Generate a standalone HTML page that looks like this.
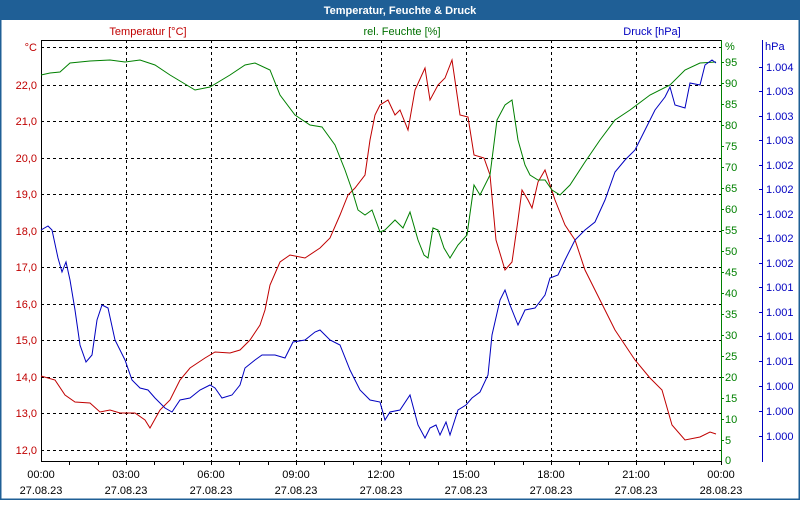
<!DOCTYPE html><html><head><style>body{margin:0;width:800px;height:500px;overflow:hidden;background:#fff;font-family:"Liberation Sans",sans-serif}</style></head><body>
<svg width="800" height="500" xmlns="http://www.w3.org/2000/svg" font-family="Liberation Sans, sans-serif" font-size="11">
<rect x="0" y="0" width="800" height="500" fill="#fff"/>
<rect x="0" y="0" width="800" height="20" fill="#1f5f96"/>
<rect x="0" y="0" width="1.5" height="500" fill="#1f5f96"/><rect x="798.5" y="0" width="1.5" height="500" fill="#1f5f96"/><rect x="0" y="498.5" width="800" height="1.5" fill="#1f5f96"/>
<text x="400" y="14" fill="#fff" font-weight="bold" text-anchor="middle" font-size="11">Temperatur, Feuchte &amp; Druck</text>
<text x="148" y="35" fill="#c00000" text-anchor="middle">Temperatur [°C]</text>
<text x="402" y="35" fill="#007000" text-anchor="middle">rel. Feuchte [%]</text>
<text x="652" y="35" fill="#0000c0" text-anchor="middle">Druck [hPa]</text>
<g stroke="#000" stroke-dasharray="3,3" stroke-width="1">
<line x1="41" x2="721" y1="47.5" y2="47.5"/><line x1="41" x2="721" y1="85.5" y2="85.5"/><line x1="41" x2="721" y1="121.5" y2="121.5"/><line x1="41" x2="721" y1="158.5" y2="158.5"/><line x1="41" x2="721" y1="194.5" y2="194.5"/><line x1="41" x2="721" y1="231.5" y2="231.5"/><line x1="41" x2="721" y1="267.5" y2="267.5"/><line x1="41" x2="721" y1="304.5" y2="304.5"/><line x1="41" x2="721" y1="340.5" y2="340.5"/><line x1="41" x2="721" y1="377.5" y2="377.5"/><line x1="41" x2="721" y1="413.5" y2="413.5"/><line x1="41" x2="721" y1="450.5" y2="450.5"/>
<line y1="40" y2="461" x1="126.5" x2="126.5"/><line y1="40" y2="461" x1="211.5" x2="211.5"/><line y1="40" y2="461" x1="296.5" x2="296.5"/><line y1="40" y2="461" x1="381.5" x2="381.5"/><line y1="40" y2="461" x1="466.5" x2="466.5"/><line y1="40" y2="461" x1="551.5" x2="551.5"/><line y1="40" y2="461" x1="636.5" x2="636.5"/>
</g>
<path d="M41.5 40.5H721.5M41.5 40V461.5H721" stroke="#000" fill="none"/>
<line x1="721.5" x2="721.5" y1="40" y2="462" stroke="#008000"/>
<line x1="762.5" x2="762.5" y1="40" y2="462" stroke="#0000c0"/>
<g stroke="#000"><path d="M69.5 461v4M98.5 461v4M126.5 461v4M154.5 461v4M183.5 461v4M211.5 461v4M239.5 461v4M268.5 461v4M296.5 461v4M324.5 461v4M353.5 461v4M381.5 461v4M409.5 461v4M438.5 461v4M466.5 461v4M494.5 461v4M523.5 461v4M551.5 461v4M579.5 461v4M608.5 461v4M636.5 461v4M664.5 461v4M693.5 461v4M721.5 461v4"/></g>
<g fill="#c00000" text-anchor="end">
<text x="37" y="51">°C</text><text x="37" y="89">22,0</text><text x="37" y="125">21,0</text><text x="37" y="162">20,0</text><text x="37" y="198">19,0</text><text x="37" y="235">18,0</text><text x="37" y="271">17,0</text><text x="37" y="308">16,0</text><text x="37" y="344">15,0</text><text x="37" y="381">14,0</text><text x="37" y="417">13,0</text><text x="37" y="454">12,0</text>
</g>
<g fill="#008000">
<text x="725" y="50">%</text><text x="725" y="66">95</text><text x="725" y="87">90</text><text x="725" y="108">85</text><text x="725" y="129">80</text><text x="725" y="150">75</text><text x="725" y="171">70</text><text x="725" y="192">65</text><text x="725" y="213">60</text><text x="725" y="234">55</text><text x="725" y="255">50</text><text x="725" y="276">45</text><text x="725" y="297">40</text><text x="725" y="318">35</text><text x="725" y="339">30</text><text x="725" y="360">25</text><text x="725" y="381">20</text><text x="725" y="402">15</text><text x="725" y="423">10</text><text x="725" y="444">5</text><text x="725" y="464">0</text>
</g>
<g stroke="#008000"><path d="M721 62.5h3M721 83.5h3M721 104.5h3M721 125.5h3M721 146.5h3M721 167.5h3M721 188.5h3M721 209.5h3M721 230.5h3M721 251.5h3M721 272.5h3M721 293.5h3M721 314.5h3M721 335.5h3M721 356.5h3M721 377.5h3M721 398.5h3M721 419.5h3M721 440.5h3"/></g>
<g fill="#0000c0">
<text x="765" y="50">hPa</text>
<text x="766" y="71">1.004</text><text x="766" y="95">1.003</text><text x="766" y="120">1.003</text><text x="766" y="144">1.003</text><text x="766" y="169">1.002</text><text x="766" y="193">1.002</text><text x="766" y="218">1.002</text><text x="766" y="242">1.002</text><text x="766" y="267">1.002</text><text x="766" y="291">1.001</text><text x="766" y="316">1.001</text><text x="766" y="340">1.001</text><text x="766" y="365">1.001</text><text x="766" y="390">1.000</text><text x="766" y="415">1.000</text><text x="766" y="440">1.000</text>
</g>
<g stroke="#0000c0"><path d="M759 67.5h3M759 91.5h3M759 116.5h3M759 140.5h3M759 165.5h3M759 189.5h3M759 214.5h3M759 238.5h3M759 263.5h3M759 287.5h3M759 312.5h3M759 336.5h3M759 361.5h3M759 386.5h3M759 411.5h3M759 436.5h3"/></g>
<g fill="#000" text-anchor="middle">
<text x="41" y="478">00:00</text><text x="41" y="494">27.08.23</text>
<text x="126" y="478">03:00</text><text x="126" y="494">27.08.23</text>
<text x="211" y="478">06:00</text><text x="211" y="494">27.08.23</text>
<text x="296" y="478">09:00</text><text x="296" y="494">27.08.23</text>
<text x="381" y="478">12:00</text><text x="381" y="494">27.08.23</text>
<text x="466" y="478">15:00</text><text x="466" y="494">27.08.23</text>
<text x="551" y="478">18:00</text><text x="551" y="494">27.08.23</text>
<text x="636" y="478">21:00</text><text x="636" y="494">27.08.23</text>
<text x="721" y="478">00:00</text><text x="721" y="494">28.08.23</text>
</g>
<polyline fill="none" stroke="#c00000" points="41,376 55,380 65,395 75,402 90,403 100,412 110,410 120,413 135,413 145,420 150,428 160,410 170,400 180,380 190,368 205,358 215,352 230,353 240,350 250,340 260,325 265,310 270,285 280,262 290,255 305,258 320,248 330,238 340,215 348,195 355,188 365,175 370,140 375,115 380,105 388,100 395,115 400,110 408,130 415,90 425,68 430,100 438,85 445,78 452,60 460,115 468,117 474,155 484,158 490,175 496,240 505,270 512,262 518,220 522,190 528,200 532,208 538,182 545,170 555,200 565,225 575,240 585,270 600,300 615,330 635,360 650,378 662,390 672,425 685,440 700,437 710,432 716,434"/>
<polyline fill="none" stroke="#008000" points="41,75 50,73 60,72 70,63 90,61 110,60 125,62 140,60 155,65 170,75 195,90 210,87 230,75 245,65 255,63 270,70 280,95 295,115 310,125 322,127 335,145 345,170 352,190 358,210 365,215 372,210 380,232 385,230 395,220 403,228 410,212 418,240 424,255 428,258 433,228 438,230 444,248 450,258 458,245 467,235 474,185 480,195 490,175 497,120 505,105 512,100 518,140 525,165 530,175 538,180 545,180 552,190 560,195 570,185 585,162 600,140 615,120 630,110 650,95 670,85 685,70 700,63 716,62"/>
<polyline fill="none" stroke="#0000c0" points="41,230 48,226 52,230 58,258 62,272 66,262 70,280 75,310 80,345 86,362 92,355 97,320 102,305 108,308 115,340 125,360 132,380 140,388 148,390 155,398 165,408 172,412 180,400 190,398 200,390 210,385 215,388 222,398 232,395 240,385 245,368 255,360 262,355 275,355 285,358 293,342 305,340 315,332 320,330 330,340 340,345 350,370 360,390 370,400 380,402 385,420 390,412 400,410 410,395 418,425 425,438 430,428 436,425 440,435 446,422 450,435 458,410 466,405 472,398 480,392 488,375 492,335 500,300 505,290 510,305 518,325 525,310 535,308 545,295 550,278 558,275 565,260 575,240 585,230 595,222 605,200 615,172 625,160 635,150 645,130 655,110 665,97 670,87 675,105 685,108 690,83 700,85 705,65 712,60 716,63"/>
</svg>
</body></html>
